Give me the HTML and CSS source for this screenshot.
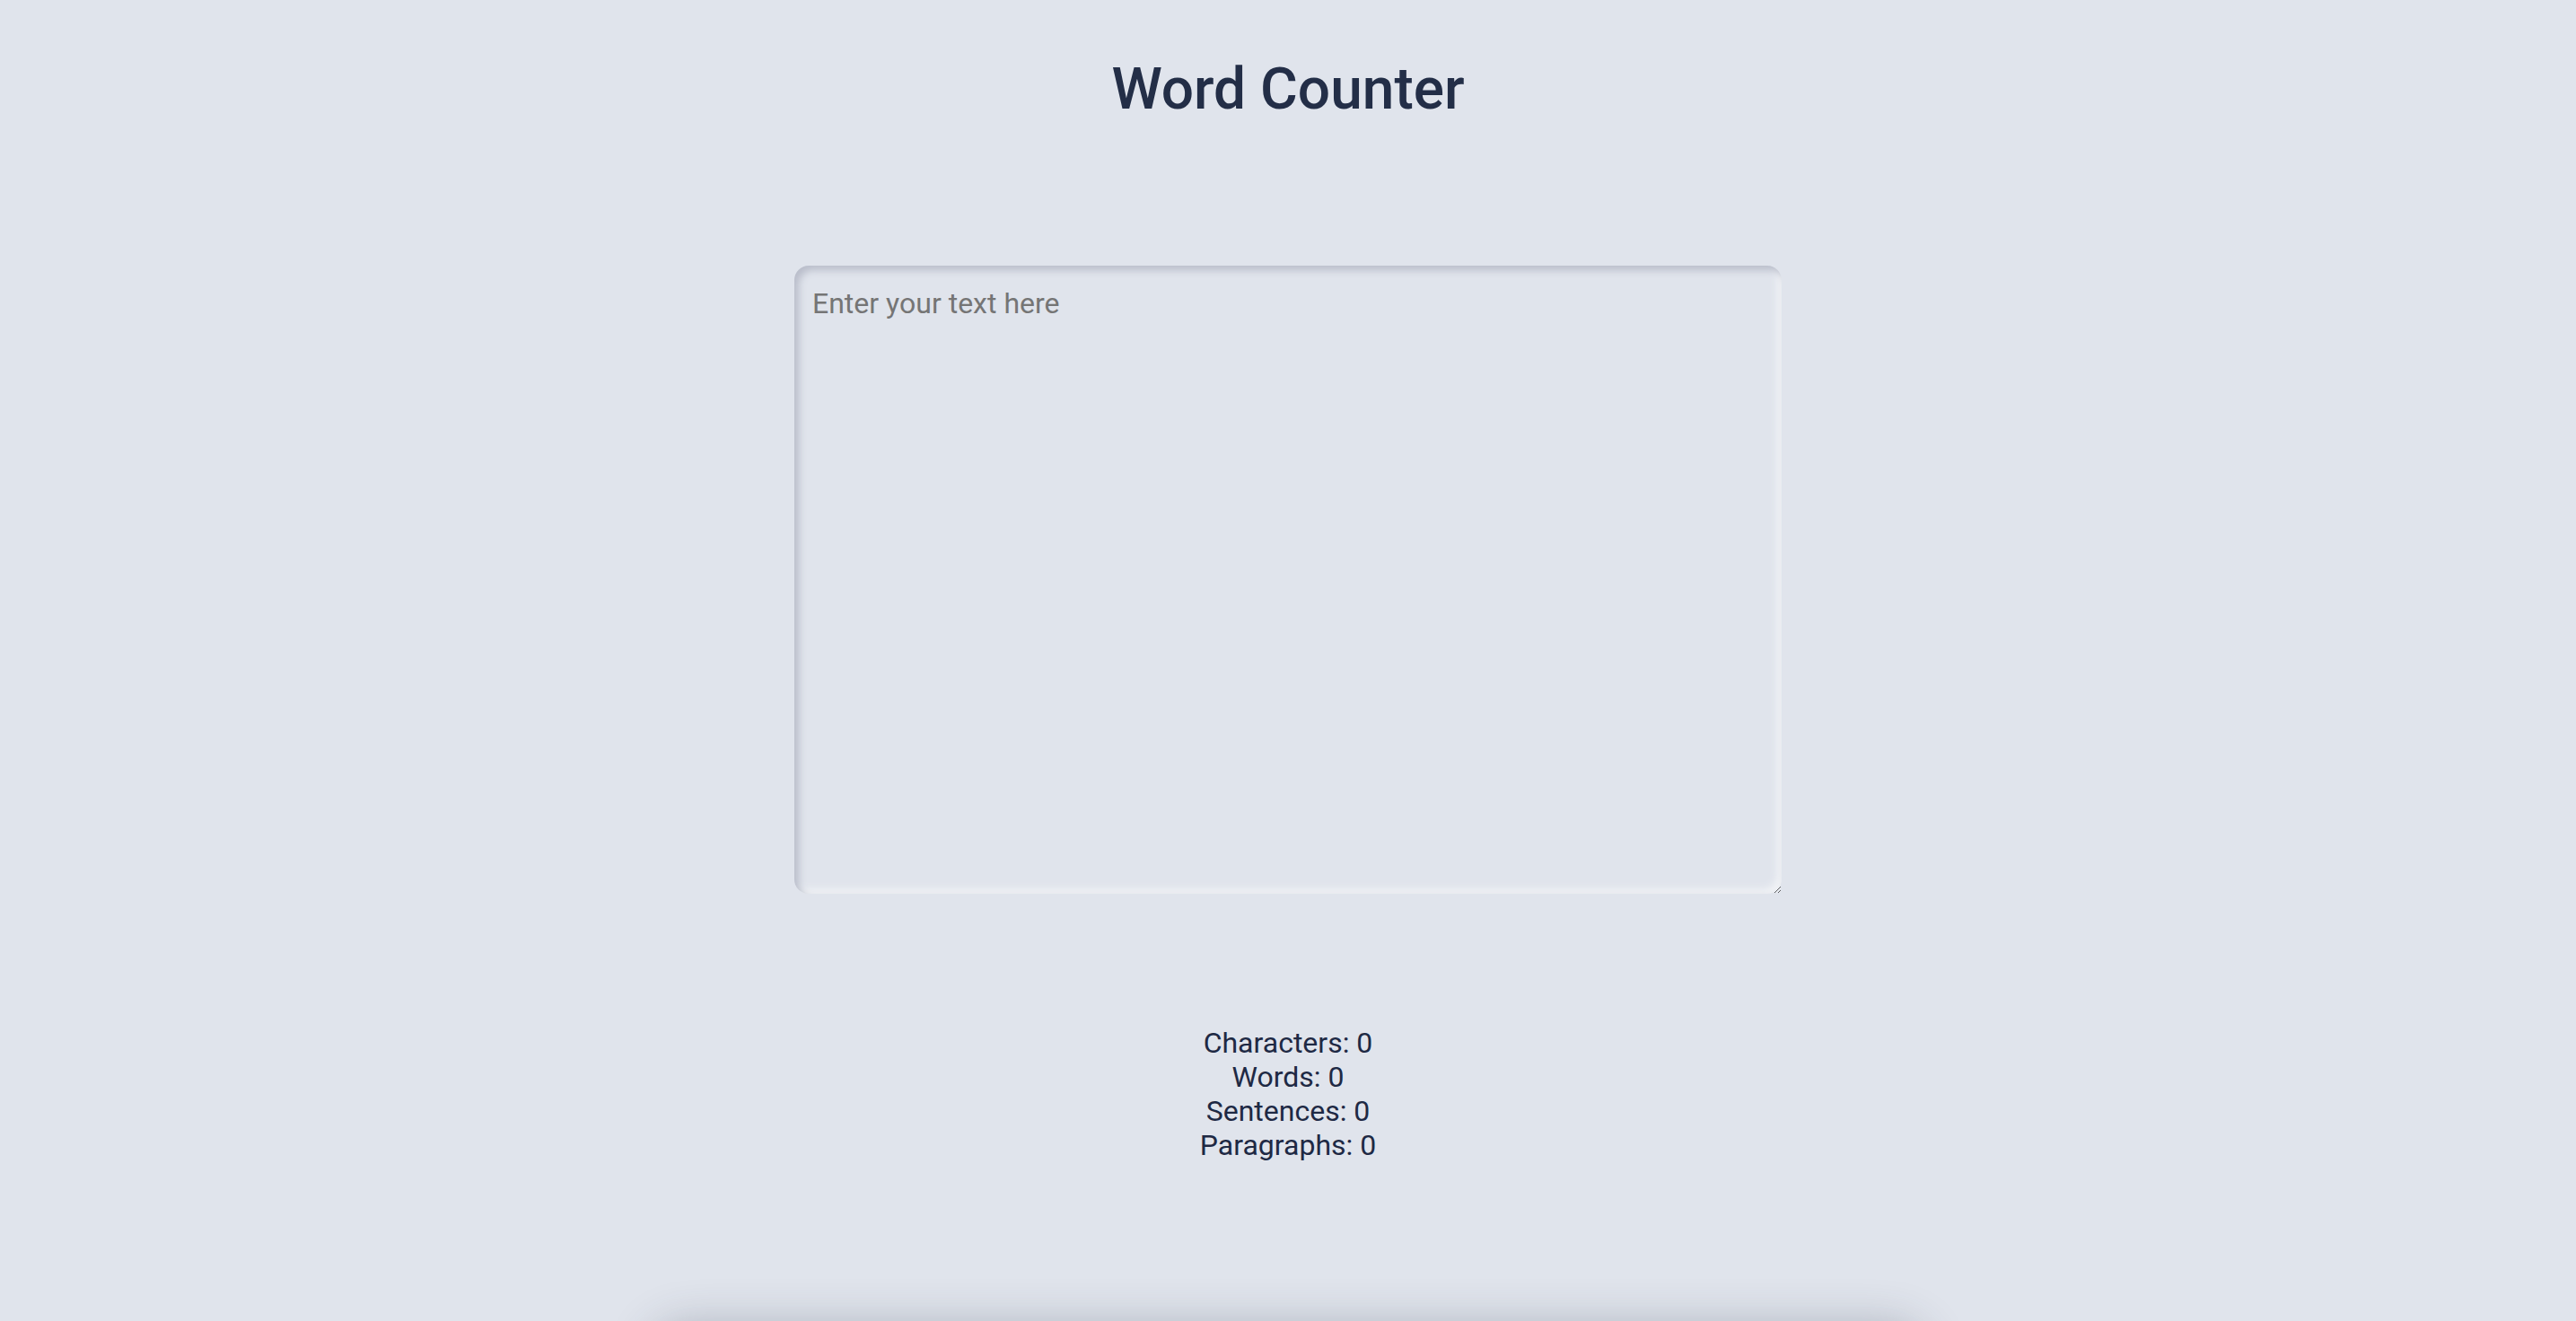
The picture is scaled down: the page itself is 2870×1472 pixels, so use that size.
FILE: index.html
```html
<!DOCTYPE html>
<html lang="en">
<head>
<meta charset="utf-8">
<title>Word Counter</title>
<link rel="stylesheet" href="styles.css">
</head>
<body>
<main class="app">
  <h1 class="title">Word Counter</h1>
  <textarea class="input" placeholder="Enter your text here"></textarea>
  <div class="stats">
    <div class="stat">Characters: <span>0</span></div>
    <div class="stat">Words: <span>0</span></div>
    <div class="stat">Sentences: <span>0</span></div>
    <div class="stat">Paragraphs: <span>0</span></div>
  </div>
  <section class="panel"></section>
</main>
</body>
</html>
```
FILE: styles.css
```css
html, body {
  margin: 0;
  padding: 0;
  background: #e0e4ec;
}
body {
  font-family: Roboto, "Liberation Sans", sans-serif;
  color: #1f2a44;
}
.app {
  display: flex;
  flex-direction: column;
  align-items: center;
}
.title {
  margin: 60px 0 0;
  font-size: 64px;
  font-weight: 500;
  line-height: 80px;
  color: #232e47;
}
.input {
  margin-top: 156px;
  box-sizing: border-box;
  width: 1100px;
  height: 700px;
  padding: 23px 20px 20px;
  border: none;
  border-radius: 16px;
  background: #e0e4ec;
  font-family: Roboto, "Liberation Sans", sans-serif;
  font-size: 32px;
  color: #1f2a44;
  box-shadow: inset 5px 5px 8px #b9bdca, inset -5px -5px 8px #f1f3f6;
  outline: none;
}
.input::placeholder {
  color: #757575;
}
.stats {
  margin-top: 147px;
  display: flex;
  flex-direction: column;
  align-items: center;
  font-size: 32px;
  line-height: 38px;
  color: #1e2944;
}
.panel {
  margin-top: 190px;
  width: 1420px;
  height: 300px;
  border-radius: 40px;
  background: #d6d9e0;
  box-shadow: 0 -8px 50px rgba(50, 58, 75, 0.3);
}
```
